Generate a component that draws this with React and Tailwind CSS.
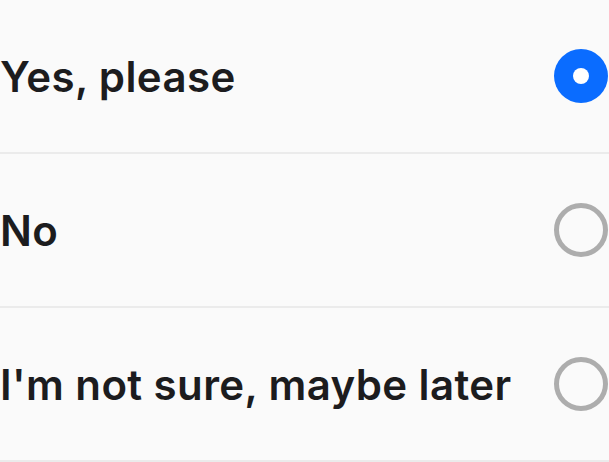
import React, { useState } from 'react';

const options = [
    { id: 'yes', label: 'Yes, please' },
    { id: 'no', label: 'No' },
    { id: 'later', label: "I'm not sure, maybe later" },
];

const Radio = ({ checked }) => (
    checked ? (
        <span className="flex items-center justify-center w-[54px] h-[54px] rounded-full bg-[#0a6cff] shrink-0">
            <span className="w-[16px] h-[16px] rounded-full bg-white" />
        </span>
    ) : (
        <span className="block w-[54px] h-[54px] rounded-full border-[5px] border-[#adadad] shrink-0" />
    )
);

const App = () => {
    const [selected, setSelected] = useState('yes');

    return (
        <div className="w-[609px] h-[462px] overflow-hidden bg-[#fafafa] font-['Inter',sans-serif]">
            {options.map((opt) => (
                <button
                    key={opt.id}
                    type="button"
                    onClick={() => setSelected(opt.id)}
                    className="flex items-center justify-between w-full h-[154px] border-b-2 border-[#ebebeb] pr-px text-left"
                >
                    <span className="text-[42px] font-semibold text-[#1c1c1e] tracking-[0.4px]">{opt.label}</span>
                    <Radio checked={selected === opt.id} />
                </button>
            ))}
        </div>
    );
};

export default App;
